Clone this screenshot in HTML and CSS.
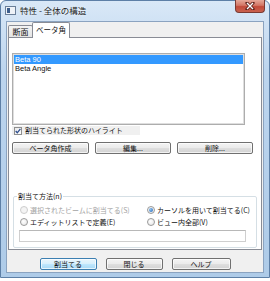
FILE: index.html
```html
<!DOCTYPE html>
<html lang="ja">
<head>
    <meta charset="UTF-8">
    <title>特性 - 全体の構造</title>
    <link rel="stylesheet" href="styles.css">
</head>
<body>
    <div class="window">
        <div class="titlebar">
            <svg class="app-icon" width="11" height="9" viewBox="0 0 11 9">
                <rect x="0.5" y="0.5" width="10" height="8" fill="#eef2f7" stroke="#6a7f99"/>
                <rect x="2" y="2" width="3" height="5" fill="#3d5e8c"/>
            </svg>
            <span class="title">特性 - 全体の構造</span>
            <div class="close-btn">
                <svg width="10" height="8" viewBox="0 0 10 8">
                    <path d="M2 1 L8 7 M8 1 L2 7" stroke="#5a1f18" stroke-width="3" stroke-linecap="square"/>
                    <path d="M2 1 L8 7 M8 1 L2 7" stroke="#ffffff" stroke-width="1.4"/>
                </svg>
            </div>
        </div>

        <div class="client">
            <div class="tabs">
                <div class="tab">断面</div>
                <div class="tab active">ベータ角</div>
            </div>

            <div class="panel">
                <div class="listbox">
                    <div class="list-item selected">Beta 90</div>
                    <div class="list-item">Beta Angle</div>
                </div>

                <div class="check-row">
                    <span class="checkbox">
                        <svg width="6" height="6" viewBox="0 0 6 6">
                            <path d="M0.7 3 L2.3 4.8 L5.4 0.8" fill="none" stroke="#2f4f8f" stroke-width="1.3"/>
                        </svg>
                    </span>
                    <span>割当てられた形状のハイライト</span>
                </div>

                <div class="btn-row">
                    <div class="btn w77">ベータ角作成</div>
                    <div class="btn w76">編集...</div>
                    <div class="btn w76">削除...</div>
                </div>

                <fieldset class="group">
                    <legend>割当て方法(n)</legend>
                    <div class="radio-grid">
                        <div class="radio-item disabled"><span class="radio"></span>選択されたビームに割当てる(S)</div>
                        <div class="radio-item"><span class="radio checked"></span>カーソルを用いて割当てる(C)</div>
                        <div class="radio-item"><span class="radio"></span>エディットリストで定義(E)</div>
                        <div class="radio-item"><span class="radio"></span>ビュー内全部(V)</div>
                    </div>
                    <div class="textfield"></div>
                </fieldset>
            </div>

            <div class="footer">
                <div class="btn default w57">割当てる</div>
                <div class="btn w57">閉じる</div>
                <div class="btn w59">ヘルプ</div>
            </div>
        </div>
    </div>
</body>
</html>
```

FILE: styles.css
```css
* {
    margin: 0;
    padding: 0;
    box-sizing: border-box;
}

body {
    background: #ffffff;
    font-family: 'Noto Sans CJK JP', 'Noto Sans', sans-serif;
    font-size: 7px;
    color: #111111;
}

.window {
    width: 270px;
    height: 278px;
    border: 1px solid #5d7fa6;
    border-radius: 6px 6px 0 0;
    padding: 0 5px 4px 5px;
    background: linear-gradient(180deg, #d9e8f7 0%, #bdd5ee 25%, #aecbe8 100%);
}

/* title bar */
.titlebar {
    display: flex;
    align-items: center;
    height: 20px;
    margin: 0 -5px;
    padding: 0 4px;
}

.app-icon {
    flex: none;
    margin-top: -1px;
}

.title {
    margin-left: 4px;
    font-size: 8.5px;
    color: #1e1e1e;
    line-height: 12px;
    margin-top: -2px;
    text-shadow: 0 0 3px rgba(255, 255, 255, 0.9);
}

.close-btn {
    margin-left: auto;
    align-self: flex-start;
    margin-top: -1px;
    width: 30px;
    height: 13px;
    border: 1px solid #7a3a32;
    border-top: none;
    border-radius: 0 0 4px 4px;
    background: linear-gradient(180deg, #e6a899 0%, #d27564 45%, #c24a39 55%, #c9624f 100%);
    display: flex;
    align-items: center;
    justify-content: center;
}

/* client area */
.client {
    height: 252px;
    background: #f0f0f0;
    border: 1px solid #8ba3c0;
    padding: 0 1px;
}

.tabs {
    display: flex;
    align-items: flex-end;
    height: 15px;
    position: relative;
    z-index: 1;
}

.tab {
    width: 25px;
    height: 12px;
    line-height: 11px;
    text-align: center;
    font-size: 8px;
    border: 1px solid #898c95;
    border-bottom: none;
    border-radius: 2px 2px 0 0;
    background: linear-gradient(180deg, #f4f4f4 0%, #e4e4e4 100%);
}

.tab.active {
    width: 38px;
    height: 16px;
    line-height: 14px;
    margin-bottom: -1px;
    margin-left: -1px;
    font-size: 7.5px;
    background: #ffffff;
}

.panel {
    height: 213px;
    border: 1px solid #898c95;
    background: #ffffff;
}

.listbox {
    margin: 15px 0 0 3px;
    width: 233px;
    height: 72px;
    border: 1px solid #adadad;
    box-shadow: inset 0 0 0 1px #dedede;
    padding: 1px;
}

.list-item {
    height: 9px;
    line-height: 9px;
    padding-left: 1px;
    font-family: 'Liberation Sans', sans-serif;
    font-size: 7.5px;
    color: #111111;
}

.list-item.selected {
    background: #3399ff;
    color: #ffffff;
}

.check-row {
    display: flex;
    align-items: center;
    gap: 3px;
    margin: 1px 0 0 3px;
    width: 128px;
    height: 9px;
    padding-left: 2px;
    background: #f0f0f0;
    line-height: 9px;
}

.checkbox {
    width: 8px;
    height: 8px;
    border: 1px solid #8f8f8f;
    background: linear-gradient(135deg, #e8e8e8, #ffffff);
    display: flex;
    align-items: center;
    justify-content: center;
}

.btn-row {
    display: flex;
    gap: 6px;
    margin: 7px 0 0 3px;
}

.btn {
    height: 12px;
    line-height: 10px;
    text-align: center;
    border: 1px solid #707070;
    border-radius: 2px;
    background: linear-gradient(180deg, #f4f4f4 0%, #ececec 45%, #dedede 55%, #d2d2d2 100%);
    box-shadow: inset 0 0 0 1px rgba(255, 255, 255, 0.7);
    color: #111111;
}

.btn.default {
    border-color: #3c7fb1;
    background: linear-gradient(180deg, #eaf6fd 0%, #d9f0fc 45%, #bee6fd 55%, #a7d9f5 100%);
}

.w57 { width: 57px; }
.w59 { width: 59px; }
.w76 { width: 76px; }
.w77 { width: 77px; }

/* group box */
.group {
    margin: 38px 0 0 4px;
    width: 243px;
    border: 1px solid #d5dfe5;
    border-radius: 2px;
    padding: 3px 6px 5px 6px;
}

.group legend {
    margin-left: -3px;
    padding: 0 1px;
    line-height: 9px;
    color: #111111;
}

.radio-grid {
    display: grid;
    grid-template-columns: 127px 1fr;
}

.radio-item {
    display: flex;
    align-items: center;
    height: 12px;
    white-space: nowrap;
}

.radio-item.disabled {
    color: #a3a3a3;
}

.radio {
    flex: none;
    width: 8px;
    height: 8px;
    margin-right: 2px;
    border: 1px solid #9a9a9a;
    border-radius: 50%;
    background: radial-gradient(circle at 40% 40%, #ffffff 0%, #e2e2e2 100%);
    display: flex;
    align-items: center;
    justify-content: center;
}

.radio-item.disabled .radio {
    border-color: #cdcdcd;
    background: #f4f4f4;
}

.radio.checked::after {
    content: "";
    width: 4px;
    height: 4px;
    border-radius: 50%;
    background: radial-gradient(circle at 35% 35%, #8fc3f2 0%, #1f63b5 100%);
}

.textfield {
    margin: 2px 0 0 -1px;
    width: 227px;
    height: 12px;
    border: 1px solid #cfcfcf;
    border-top-color: #b8b8b8;
    background: #ffffff;
}

/* dialog buttons */
.footer {
    display: flex;
    justify-content: center;
    gap: 9px;
    margin-top: 8px;
}
```
